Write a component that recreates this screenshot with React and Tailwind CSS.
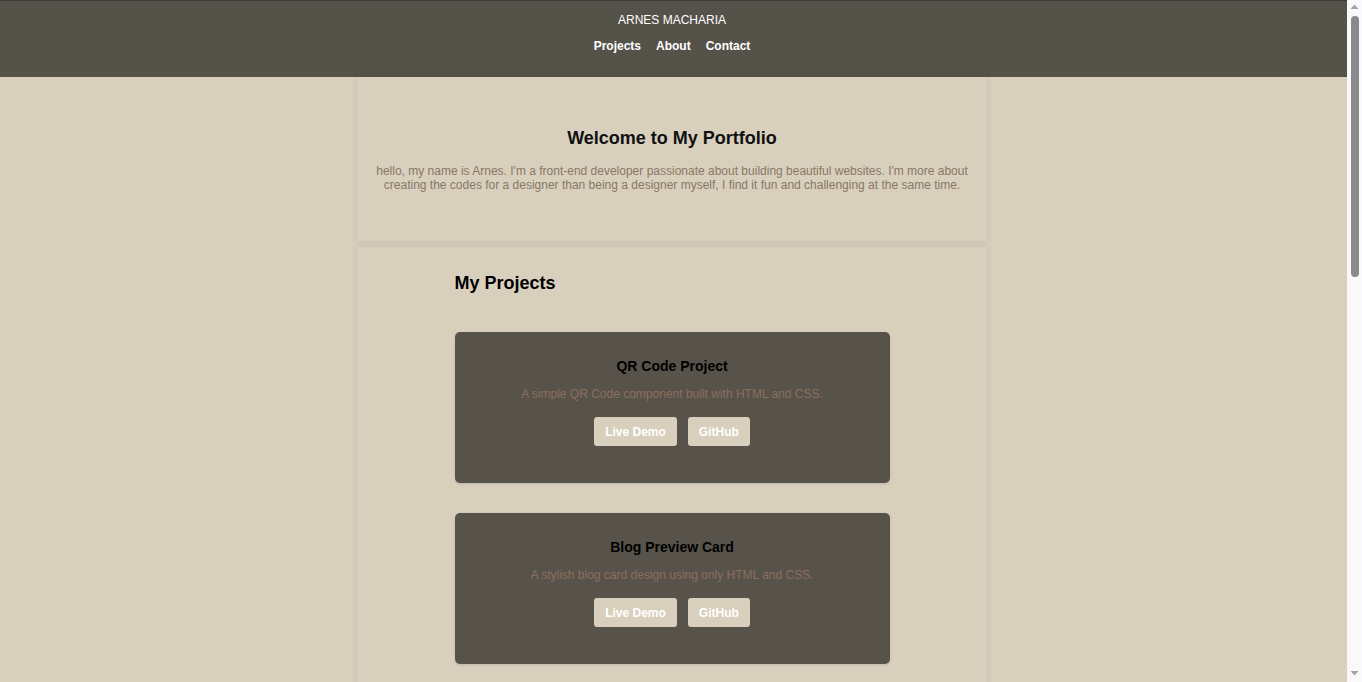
import React from 'react';

// --- DATA ---
const projects = [
  { title: 'QR Code Project', desc: 'A simple QR Code component built with HTML and CSS.' },
  { title: 'Blog Preview Card', desc: 'A stylish blog card design using only HTML and CSS.' },
  { title: 'Product Preview Card', desc: 'A responsive product card layout built with HTML and CSS.' },
  { title: 'Recipe Page', desc: 'A clean recipe page laid out with semantic HTML and CSS.' },
];

const ProjectCard = ({ title, desc }) => (
  <div className="bg-[#57534a] rounded-[5px] pt-[26px] pb-[37px] px-5 flex flex-col items-center text-center shadow-sm">
    <h3 className="text-[14px] leading-[17px] font-bold text-black">{title}</h3>
    <p className="mt-[12px] text-[12px] leading-[14px] text-[#8d6e5e]">{desc}</p>
    <div className="mt-[16px] flex gap-[11px]">
      <a className="bg-[#d8cfbc] text-white font-bold text-[12px] leading-[14px] px-[11px] py-[7.5px] rounded-[3px]">Live Demo</a>
      <a className="bg-[#d8cfbc] text-white font-bold text-[12px] leading-[14px] px-[11px] py-[7.5px] rounded-[3px]">GitHub</a>
    </div>
  </div>
);

// browser-like scrollbar on the right edge
const Scrollbar = () => (
  <aside className="sticky top-0 h-screen w-[15px] shrink-0 bg-[#f9f9fb] flex flex-col items-center">
    <svg width="15" height="14" viewBox="0 0 15 14" className="shrink-0">
      <path d="M3.5 9 L7.5 4.5 L11.5 9 Z" fill="#a3a3a3" />
    </svg>
    <div className="mt-[2px] w-[8px] h-[261px] rounded-full bg-[#8a8a8a]" />
    <div className="flex-1" />
    <svg width="15" height="14" viewBox="0 0 15 14" className="shrink-0 mb-[2px]">
      <path d="M3.5 5 L7.5 9.5 L11.5 5 Z" fill="#a3a3a3" />
    </svg>
  </aside>
);

export default function App() {
  return (
    <div className="flex min-h-screen bg-[#d8d0bd] font-['Liberation_Sans',Arial,sans-serif]">
      <div className="flex-1 min-w-0">
        {/* --- HEADER --- */}
        <header className="h-[77px] bg-[#55524a] border-t border-[#3d3b36] pr-[3px] flex flex-col items-center">
          <h1 className="mt-[12px] text-[12px] leading-[15px] text-white">ARNES MACHARIA</h1>
          <nav className="mt-[11px] flex gap-[15px] text-[12px] leading-[15px] font-bold text-white">
            <a>Projects</a>
            <a>About</a>
            <a>Contact</a>
          </nav>
        </header>

        {/* --- MAIN --- */}
        <div className="pr-[3px]">
          <main className="w-[630px] mx-auto flex flex-col gap-[6px] pb-10">
            <section className="shadow-[0_0_6px_rgba(0,0,0,0.1)] pt-[50px] pb-[49px] px-[18px] text-center">
              <h2 className="text-[18px] leading-[22px] font-bold text-[#111]">Welcome to My Portfolio</h2>
              <p className="mt-[15px] text-[12px] leading-[14px] text-[#8a7765]">
                hello, my name is Arnes. I'm a front-end developer passionate about building beautiful websites. I'm more about creating the codes for a designer than being a designer myself, I find it fun and challenging at the same time.
              </p>
            </section>

            <section className="shadow-[0_0_6px_rgba(0,0,0,0.1)] pt-[25px] pb-[50px]">
              <div className="w-[435px] mx-auto">
                <h2 className="text-[18px] leading-[22px] font-bold text-black">My Projects</h2>
                <div className="mt-[38px] flex flex-col gap-[30px]">
                  {projects.map((p) => (
                    <ProjectCard key={p.title} {...p} />
                  ))}
                </div>
              </div>
            </section>

            <section className="shadow-[0_0_6px_rgba(0,0,0,0.1)] pt-[25px] pb-[50px]">
              <div className="w-[435px] mx-auto">
                <h2 className="text-[18px] leading-[22px] font-bold text-black">About Me</h2>
                <p className="mt-[20px] text-[12px] leading-[14px] text-[#8a7765]">
                  I enjoy turning designs into clean, responsive code using HTML, CSS and JavaScript. I'm always learning new tools and techniques to improve my work.
                </p>
              </div>
            </section>

            <section className="shadow-[0_0_6px_rgba(0,0,0,0.1)] pt-[25px] pb-[50px]">
              <div className="w-[435px] mx-auto">
                <h2 className="text-[18px] leading-[22px] font-bold text-black">Contact</h2>
                <p className="mt-[20px] text-[12px] leading-[14px] text-[#8a7765]">
                  Feel free to reach out for collaborations or just a friendly hello.
                </p>
              </div>
            </section>
          </main>
        </div>
      </div>
      <Scrollbar />
    </div>
  );
}
